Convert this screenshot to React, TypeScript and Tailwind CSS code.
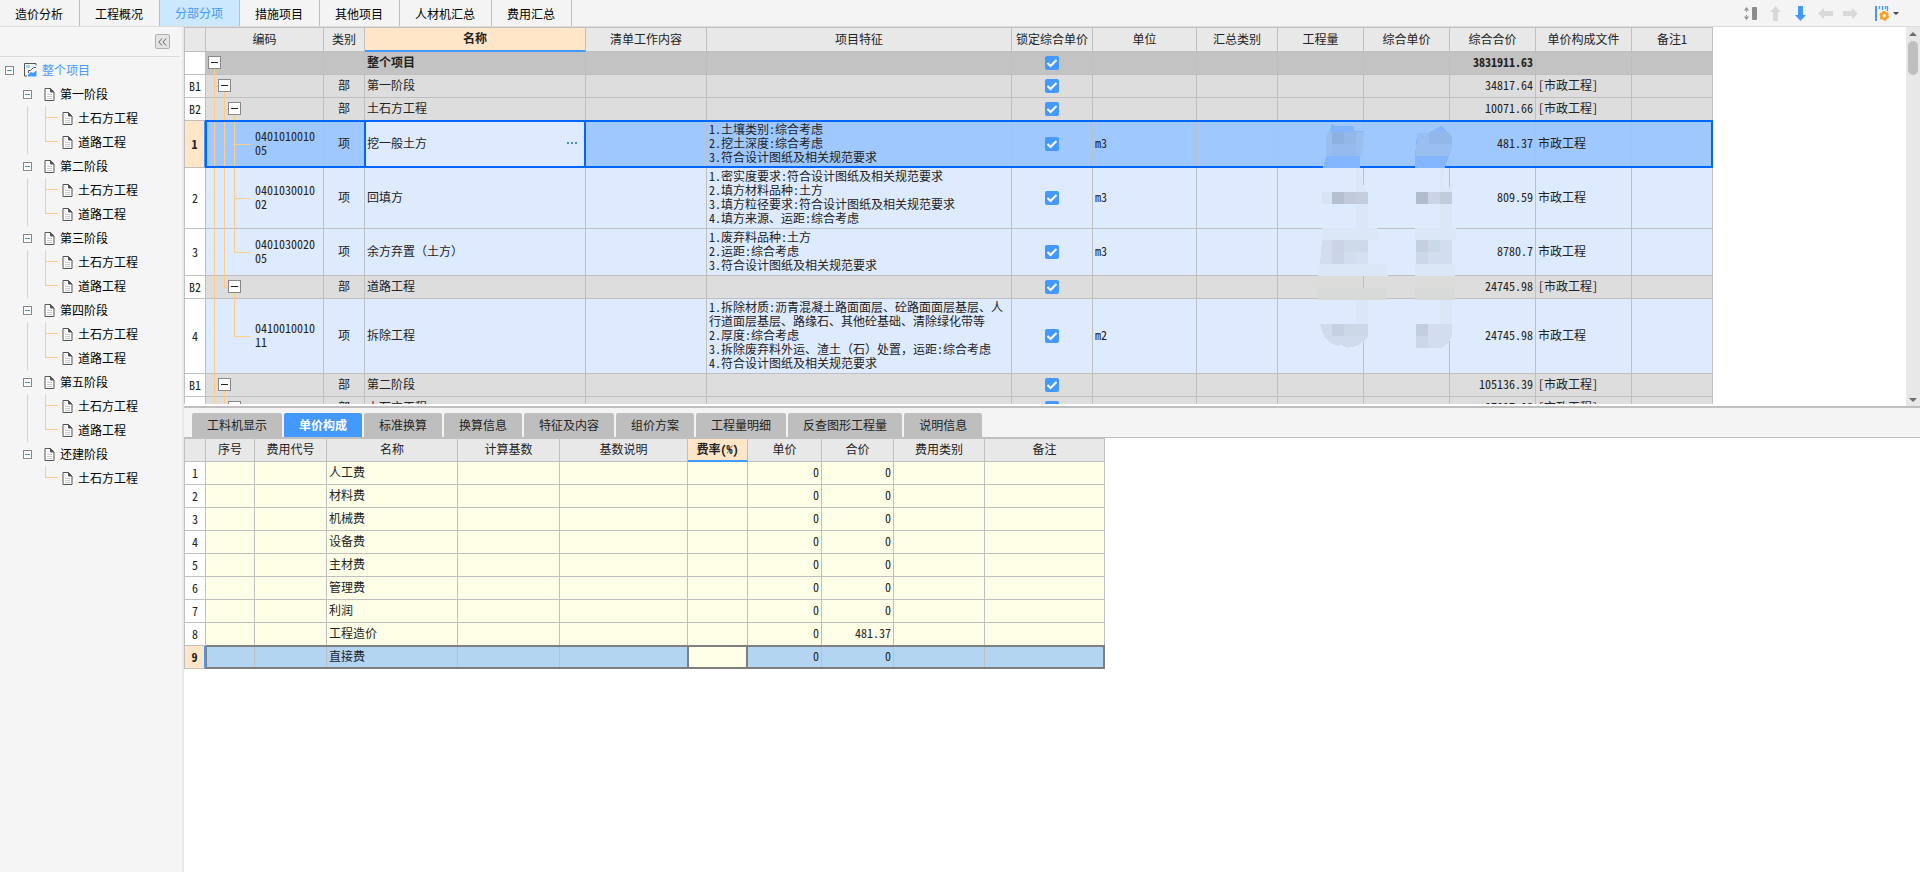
import { ReactNode } from "react";

type Column = { title: string; width: number; active?: boolean };

type Guide = "line" | "branch" | "end" | "none";

type CostRow = {
  mark: string;
  kind: "total" | "section" | "item";
  depth: number;
  guides: Guide[];
  code?: string;
  type?: string;
  name: string;
  feature?: string;
  unit?: string;
  amount: string;
  file?: string;
  selected?: boolean;
};

const MODULES = [
  "造价分析",
  "工程概况",
  "分部分项",
  "措施项目",
  "其他项目",
  "人材机汇总",
  "费用汇总",
];

const STAGES = [
  { name: "第一阶段", parts: ["土石方工程", "道路工程"] },
  { name: "第二阶段", parts: ["土石方工程", "道路工程"] },
  { name: "第三阶段", parts: ["土石方工程", "道路工程"] },
  { name: "第四阶段", parts: ["土石方工程", "道路工程"] },
  { name: "第五阶段", parts: ["土石方工程", "道路工程"] },
  { name: "还建阶段", parts: ["土石方工程"] },
];

const COST_COLUMNS: Column[] = [
  { title: "", width: 21 },
  { title: "编码", width: 118 },
  { title: "类别", width: 41 },
  { title: "名称", width: 221, active: true },
  { title: "清单工作内容", width: 121 },
  { title: "项目特征", width: 305 },
  { title: "锁定综合单价", width: 81 },
  { title: "单位", width: 104 },
  { title: "汇总类别", width: 81 },
  { title: "工程量", width: 86 },
  { title: "综合单价", width: 86 },
  { title: "综合合价", width: 86 },
  { title: "单价构成文件", width: 96 },
  { title: "备注1", width: 81 },
];

const COST_ROWS: CostRow[] = [
  { mark: "", kind: "total", depth: 0, guides: [], name: "整个项目", amount: "3831911.63" },
  {
    mark: "B1",
    kind: "section",
    depth: 1,
    guides: ["branch"],
    type: "部",
    name: "第一阶段",
    amount: "34817.64",
    file: "[市政工程]",
  },
  {
    mark: "B2",
    kind: "section",
    depth: 2,
    guides: ["line", "branch"],
    type: "部",
    name: "土石方工程",
    amount: "10071.66",
    file: "[市政工程]",
  },
  {
    mark: "1",
    kind: "item",
    depth: 3,
    guides: ["line", "line", "branch"],
    code: "040101001005",
    type: "项",
    name: "挖一般土方",
    feature: "1.土壤类别:综合考虑\n2.挖土深度:综合考虑\n3.符合设计图纸及相关规范要求",
    unit: "m3",
    amount: "481.37",
    file: "市政工程",
    selected: true,
  },
  {
    mark: "2",
    kind: "item",
    depth: 3,
    guides: ["line", "line", "branch"],
    code: "040103001002",
    type: "项",
    name: "回填方",
    feature:
      "1.密实度要求:符合设计图纸及相关规范要求\n2.填方材料品种:土方\n3.填方粒径要求:符合设计图纸及相关规范要求\n4.填方来源、运距:综合考虑",
    unit: "m3",
    amount: "809.59",
    file: "市政工程",
  },
  {
    mark: "3",
    kind: "item",
    depth: 3,
    guides: ["line", "line", "end"],
    code: "040103002005",
    type: "项",
    name: "余方弃置（土方）",
    feature: "1.废弃料品种:土方\n2.运距:综合考虑\n3.符合设计图纸及相关规范要求",
    unit: "m3",
    amount: "8780.7",
    file: "市政工程",
  },
  {
    mark: "B2",
    kind: "section",
    depth: 2,
    guides: ["line", "end"],
    type: "部",
    name: "道路工程",
    amount: "24745.98",
    file: "[市政工程]",
  },
  {
    mark: "4",
    kind: "item",
    depth: 3,
    guides: ["line", "none", "end"],
    code: "041001001011",
    type: "项",
    name: "拆除工程",
    feature:
      "1.拆除材质:沥青混凝土路面面层、砼路面面层基层、人行道面层基层、路缘石、其他砼基础、清除绿化带等\n2.厚度:综合考虑\n3.拆除废弃料外运、渣土（石）处置，运距:综合考虑\n4.符合设计图纸及相关规范要求",
    unit: "m2",
    amount: "24745.98",
    file: "市政工程",
  },
  {
    mark: "B1",
    kind: "section",
    depth: 1,
    guides: ["branch"],
    type: "部",
    name: "第二阶段",
    amount: "105136.39",
    file: "[市政工程]",
  },
  {
    mark: "B2",
    kind: "section",
    depth: 2,
    guides: ["line", "branch"],
    type: "部",
    name: "土石方工程",
    amount: "97097.98",
    file: "[市政工程]",
  },
];

const DETAIL_TABS = [
  "工料机显示",
  "单价构成",
  "标准换算",
  "换算信息",
  "特征及内容",
  "组价方案",
  "工程量明细",
  "反查图形工程量",
  "说明信息",
];

const FEE_COLUMNS: Column[] = [
  { title: "", width: 21 },
  { title: "序号", width: 49 },
  { title: "费用代号", width: 72 },
  { title: "名称", width: 131 },
  { title: "计算基数", width: 102 },
  { title: "基数说明", width: 128 },
  { title: "费率(%)", width: 60, active: true },
  { title: "单价", width: 74 },
  { title: "合价", width: 72 },
  { title: "费用类别", width: 91 },
  { title: "备注", width: 120 },
];

const FEE_ROWS = [
  { name: "人工费", total: "0" },
  { name: "材料费", total: "0" },
  { name: "机械费", total: "0" },
  { name: "设备费", total: "0" },
  { name: "主材费", total: "0" },
  { name: "管理费", total: "0" },
  { name: "利润", total: "0" },
  { name: "工程造价", total: "481.37" },
  { name: "直接费", total: "0" },
];

const ROW_BG = {
  total: "bg-[#c3c3c3] font-bold",
  section: "bg-[#dddddd]",
  item: "bg-[#deebff]",
};

const CELL = "border-r border-b border-[#bfbfbf] px-0.5 pt-0 pb-0.5";

function DocIcon() {
  return (
    <svg width="11" height="13" viewBox="0 0 11 13" fill="none">
      <path d="M1 .5H6.5L10 4V12.5H1Z" fill="#fff" stroke="#555" />
      <path d="M6.5 .5V4H10Z" fill="#555" stroke="#555" />
      <path d="M3 6.5H8M3 8.5H8M3 10.5H8" stroke="#ccc" />
    </svg>
  );
}

function ProjectIcon() {
  return (
    <svg width="13" height="14" viewBox="0 0 13 14" fill="none">
      <path d="M12 2.5V.5H.5V13H3" stroke="#555" />
      <path d="M2 2H6V5H2Z" fill="#9fd0ff" />
      <path d="M12 4.5H9.5L6.5 7.5H4.5V10" stroke="#555" />
      <path d="M4 13.5V11.5L7 9L9 10L12.5 7.5V13.5Z" fill="#4499ff" />
    </svg>
  );
}

function TreeToggle() {
  return (
    <button
      aria-label="折叠"
      className="flex size-[9px] shrink-0 items-center justify-center border border-[#888] bg-white"
    >
      <span className="h-px w-[5px] bg-[#2a9fd8]" />
    </button>
  );
}

function Sidebar() {
  return (
    <aside className="flex w-[184px] shrink-0 flex-col border-r-2 border-[#e9e9e9] bg-[#f5f5f5]">
      <div className="mr-0.5 flex h-[30px] items-center justify-end border-b border-[#dcdcdc] pr-2.5">
        <button
          aria-label="收起"
          className="flex size-[15px] items-center justify-center rounded-[2px] border border-[#b0b0b0] bg-[#e4e4e4]"
        >
          <svg width="9" height="8" viewBox="0 0 9 8" fill="none" stroke="#666">
            <path d="M4 .5L.8 4L4 7.5M8.2 .5L5 4L8.2 7.5" />
          </svg>
        </button>
      </div>
      <nav className="pt-px text-black">
        <div className="flex h-6 items-center pl-[5px]">
          <TreeToggle />
          <span className="ml-2.5">
            <ProjectIcon />
          </span>
          <a href="#" className="ml-[5px] text-[#4499ff]">
            整个项目
          </a>
        </div>
        {STAGES.map((stage, i) => (
          <div key={stage.name}>
            <div className="flex h-6 items-center pl-[23px]">
              <TreeToggle />
              <span className="ml-3">
                <DocIcon />
              </span>
              <a href="#" className="ml-[5px]">
                {stage.name}
              </a>
            </div>
            <ul
              className={
                i < STAGES.length - 1
                  ? "ml-[27px] border-l border-[#ffcc88]"
                  : "ml-[27px] border-l border-transparent"
              }
            >
              {stage.parts.map((part, j) => (
                <li key={part} className="flex h-6 items-center pl-[17px]">
                  <svg width="13" height="24" viewBox="0 0 13 24" stroke="#ffcc88">
                    <path d={j < stage.parts.length - 1 ? "M.5 0V24" : "M.5 0V12"} />
                    <path d="M0 11.5H13" />
                  </svg>
                  <span className="ml-1">
                    <DocIcon />
                  </span>
                  <a href="#" className="ml-[5px]">
                    {part}
                  </a>
                </li>
              ))}
            </ul>
          </div>
        ))}
      </nav>
    </aside>
  );
}

function IconButton({ label, children }: { label: string; children: ReactNode }) {
  return (
    <button aria-label={label} className="flex w-[25px] items-center justify-center">
      {children}
    </button>
  );
}

function TopBar() {
  return (
    <header className="flex h-[27px] justify-between border-b border-[#dcdcdc] bg-[#f4f4f4]">
      <div className="flex">
        {MODULES.map((name) => (
          <button
            key={name}
            className={
              name === "分部分项"
                ? "border-r border-[#bfbfbf] bg-[#cce8ff] pr-4 pl-[15px] text-[#4499ff]"
                : "border-r border-[#bfbfbf] pt-0.5 pr-4 pl-[15px] text-black"
            }
          >
            {name}
          </button>
        ))}
      </div>
      <div className="flex pr-[21px]">
        <IconButton label="调整行高">
          <svg width="13" height="13" viewBox="0 0 13 13" fill="#8c8c8c">
            <path d="M2.5 0L5 3.5H0ZM2 4H3V5H2ZM2 8H3V9H2ZM2.5 13L0 9.5H5Z" />
            <rect x="8" y="0" width="5" height="13" rx="1" />
          </svg>
        </IconButton>
        <IconButton label="上移">
          <svg width="11" height="15" viewBox="0 0 11 15" fill="#d9d9d9">
            <path d="M5.5 0L11 6H8V15H3V6H0Z" />
          </svg>
        </IconButton>
        <IconButton label="下移">
          <svg width="11" height="15" viewBox="0 0 11 15" fill="#4499ff">
            <path d="M5.5 15L0 9H3V0H8V9H11Z" />
          </svg>
        </IconButton>
        <IconButton label="升级">
          <svg width="15" height="11" viewBox="0 0 15 11" fill="#d9d9d9">
            <path d="M0 5.5L6 0V3H15V8H6V11Z" />
          </svg>
        </IconButton>
        <IconButton label="降级">
          <svg width="15" height="11" viewBox="0 0 15 11" fill="#d9d9d9">
            <path d="M15 5.5L9 0V3H0V8H9V11Z" />
          </svg>
        </IconButton>
        <button aria-label="列设置" className="ml-3 flex items-center gap-1">
          <svg width="14" height="15" viewBox="0 0 14 15" fill="none">
            <path d="M1 0V15" stroke="#4499ff" strokeWidth="2" />
            <path d="M4.5 0V3M7.5 0V4M10.5 0V3M12.5 0V5" stroke="#4499ff" strokeWidth="1.4" />
            <circle cx="9.2" cy="9.8" r="2.9" stroke="#ff9f1f" strokeWidth="2.4" />
            <circle
              cx="9.2"
              cy="9.8"
              r="4.2"
              stroke="#ff9f1f"
              strokeWidth="1.4"
              strokeDasharray="2.6 1.8"
            />
          </svg>
          <svg width="6" height="3" viewBox="0 0 6 3" fill="#444">
            <path d="M0 0H6L3 3Z" />
          </svg>
        </button>
      </div>
    </header>
  );
}

function TableHead({ columns, rowClass }: { columns: Column[]; rowClass: string }) {
  return (
    <>
      <colgroup>
        {columns.map((col, i) => (
          <col key={i} style={{ width: col.width }} />
        ))}
      </colgroup>
      <thead>
        <tr className={rowClass}>
          {columns.map((col, i) => (
            <th
              key={i}
              className={
                col.active
                  ? "border-r border-b-2 border-r-[#bfbfbf] border-b-[#4499ff] bg-[#ffe6c8] pb-0.5 font-bold whitespace-nowrap"
                  : "border-r border-b border-[#bfbfbf] bg-[#e8e8e8] pb-0.5 font-normal whitespace-nowrap"
              }
            >
              {col.title}
            </th>
          ))}
        </tr>
      </thead>
    </>
  );
}

/* Grid text uses half-width digits, full-width punctuation has to stay full */
function GridText({ text }: { text: string }) {
  return text.split(/([（），])/).map((part, i) =>
    i % 2 ? (
      <span key={i} className="[font-feature-settings:normal]">
        {part}
      </span>
    ) : (
      part
    )
  );
}

/* Connector lines behind the code column, one level every 10px */
function Guides({ row }: { row: CostRow }) {
  return (
    <svg
      className="absolute top-0 left-0 h-[calc(100%+1px)] w-12"
      stroke="#ffcc88"
      aria-hidden="true"
    >
      {row.guides.map((guide, level) => {
        if (guide === "none") return null;
        const x = 8.5 + level * 10;
        return (
          <g key={level}>
            <line x1={x} x2={x} y1="0" y2={guide === "end" ? "50%" : "100%"} />
            {guide !== "line" && (
              <line x1={x} x2={row.kind === "item" ? x + 16 : x + 4} y1="50%" y2="50%" />
            )}
          </g>
        );
      })}
      {row.kind !== "item" && (
        <line x1={8.5 + row.depth * 10} x2={8.5 + row.depth * 10} y1="50%" y2="100%" />
      )}
    </svg>
  );
}

const TOGGLE_INDENT = ["ml-0", "ml-2.5", "ml-5"];

function CodeCell({ row }: { row: CostRow }) {
  return (
    <td className={`${CELL} relative`}>
      <Guides row={row} />
      {row.kind === "item" ? (
        <span className="block pr-1 pl-[47px] break-all">{row.code}</span>
      ) : (
        <button
          aria-label="折叠"
          className={`relative flex size-[13px] items-center justify-center border border-[#888] bg-white ${TOGGLE_INDENT[row.depth]}`}
        >
          <span className="h-px w-[7px] bg-[#222]" />
        </button>
      )}
    </td>
  );
}

function LockBox({ name }: { name: string }) {
  return (
    <span className="grid place-items-center">
      <input
        type="checkbox"
        defaultChecked
        aria-label={`锁定综合单价 ${name}`}
        className="col-start-1 row-start-1 size-3.5 appearance-none rounded-[2px] bg-[#4499ff]"
      />
      <svg
        className="pointer-events-none col-start-1 row-start-1"
        width="14"
        height="14"
        viewBox="0 0 14 14"
        fill="none"
      >
        <path d="M2.5 7L5.5 10L11.5 4" stroke="#fff" strokeWidth="2" />
      </svg>
    </span>
  );
}

/* Pixelated patches over the hidden quantities and prices */
function Mosaic() {
  return (
    <svg
      className="pointer-events-none absolute top-[89px] left-[1116px] z-20"
      width="170"
      height="240"
      viewBox="0 0 510 720"
      shapeRendering="crispEdges"
      aria-hidden="true"
    >
      <path d="M96 24L108 30H162V45H191V66L180 120V156H69L78 120V66L87 48Z" fill="#84b6ff" />
      <path d="M84 48H191V66L184 120H78V66Z" fill="#98bff0" />
      <path d="M96 48H132V84H96Z" fill="#8db1e0" />
      <path d="M132 48H168V84H132Z" fill="#93b7e7" />
      <path d="M96 84H168V120H96Z" fill="#95bbee" />
      <path d="M423 29L456 60V90L435 156H345V120L351 51H386Z" fill="#84b6ff" />
      <path d="M351 51H446L456 60V90L444 120H348Z" fill="#99bff1" />
      <path d="M386 51L400 45H440L456 60V84H386Z" fill="#92b8ea" />

      <path d="M186 207H195V480H186ZM444 213H453V478H444Z" fill="#deebff" />
      <path d="M168 156H180L186 200L204 234V336H168Z" fill="#dae7f7" />
      <path d="M66 228H96V264H66Z" fill="#d7e4f5" />
      <path d="M96 228H132V264H96Z" fill="#b5bfd0" />
      <path d="M132 228H168V264H132Z" fill="#c0cada" />
      <path d="M168 228H204V264H168Z" fill="#c4cddb" />
      <path d="M420 156H434L428 212H456V336H420Z" fill="#dae7f7" />
      <path d="M348 228H384V264H348Z" fill="#b3bccd" />
      <path d="M384 228H420V264H384Z" fill="#cad4e7" />
      <path d="M420 228H456V264H420Z" fill="#c1ccdb" />

      <path d="M66 336H231L240 372H66ZM345 336H468V372H345Z" fill="#dae7f7" />
      <path d="M66 372H204V444H60Z" fill="#d2deef" />
      <path d="M96 372H132V408H96Z" fill="#cbd4e7" />
      <path d="M132 372H204V408H132Z" fill="#cedaea" />
      <path d="M96 408H132V444H96Z" fill="#cad6e7" />
      <path d="M168 408H204V444H168Z" fill="#d6e0f3" />
      <path d="M348 372H456V444H348Z" fill="#d2deef" />
      <path d="M348 372H384V408H348Z" fill="#c5cfe0" />
      <path d="M384 372H420V408H384Z" fill="#cbd8e8" />
      <path d="M348 408H384V444H348Z" fill="#ccd8e9" />
      <path d="M60 444H256L264 480H54ZM345 444H467L465 480H345Z" fill="#dae7f7" />

      <path d="M54 480H188V516H54ZM345 480H465V516H345Z" fill="#dcdcdb" />
      <path d="M54 516H264L258 552H54ZM345 516H465V552H345Z" fill="#d8dada" />

      <path d="M186 552H204V660H186ZM444 552H453V660H444Z" fill="#deebff" />
      <path d="M168 552H204V624H168ZM420 552H456V624H420Z" fill="#dae7f7" />
      <path
        d="M60 624H204V666L190 678L168 690L144 696L128 690L120 684L114 690L90 680L72 662Z"
        fill="#d0dcee"
      />
      <path d="M96 624H204V660H96Z" fill="#cbd7e7" />
      <path d="M96 624H132V660H96Z" fill="#c5d1e3" />
      <path d="M348 624H456V660L446 682L424 696H348Z" fill="#d2deef" />
      <path d="M348 624H384V660H348Z" fill="#c5cee1" />
      <path d="M348 660H384V696H348Z" fill="#ccd8e9" />
    </svg>
  );
}

function CostTable() {
  return (
    <table className="w-0 table-fixed border-separate border-spacing-0 border-t border-l border-[#bfbfbf]">
      <TableHead columns={COST_COLUMNS} rowClass="h-6" />
      <tbody>
        {COST_ROWS.map((row, i) => (
          <tr
            key={i}
            className={
              row.selected
                ? "relative h-[23px] bg-[#9fc8ff]"
                : `h-[23px] ${ROW_BG[row.kind]}`
            }
          >
            <th
              className={
                row.selected
                  ? "border-r-2 border-b border-r-[#4499ff] border-b-[#bfbfbf] bg-[#ffe6c8] p-0 font-bold"
                  : "border-r border-b border-[#bfbfbf] bg-white p-0 font-normal"
              }
            >
              {row.mark}
              {row.selected && (
                <span className="pointer-events-none absolute -top-px right-0 bottom-0 left-5 z-10 border-2 border-[#0066ff]" />
              )}
            </th>
            <CodeCell row={row} />
            <td className={`${CELL} text-center`}>{row.type}</td>
            {row.selected ? (
              <td className={`${CELL} relative bg-[#deebff]`}>
                <span className="pointer-events-none absolute -top-px right-[-1px] bottom-[-1px] -left-px z-10 border-2 border-[#0066ff]" />
                <span className="flex items-center justify-between pr-[3px]">
                  <input
                    aria-label="名称"
                    defaultValue={row.name}
                    className="h-3.5 w-40 bg-transparent outline-none"
                  />
                  <button aria-label="更多" className="flex h-3.5 w-4 items-center justify-center gap-0.5">
                    <span className="size-0.5 bg-[#4490d0]" />
                    <span className="size-0.5 bg-[#4490d0]" />
                    <span className="size-0.5 bg-[#4490d0]" />
                  </button>
                </span>
              </td>
            ) : (
              <td className={CELL}>
                <GridText text={row.name} />
              </td>
            )}
            <td className={CELL} />
            <td className={`${CELL} whitespace-pre-line`}>
              {row.feature?.split("\n").map((line) => (
                <p key={line} className="first:pt-px last:pb-px">
                  <GridText text={line} />
                </p>
              ))}
            </td>
            <td className="border-r border-b border-[#bfbfbf] p-0">
              <LockBox name={row.name} />
            </td>
            <td className={CELL}>{row.unit}</td>
            <td className={CELL} />
            <td className={CELL} />
            <td className={CELL} />
            <td className={`${CELL} text-right`}>{row.amount}</td>
            <td className={`${CELL} whitespace-nowrap`}>{row.file}</td>
            <td className={CELL} />
          </tr>
        ))}
      </tbody>
    </table>
  );
}

function ScrollBar() {
  return (
    <div className="flex w-3.5 shrink-0 flex-col items-center justify-between bg-[#e8e8e8] pt-[5px] pb-1">
      <div className="flex flex-col items-center gap-[5px]">
        <svg width="8" height="4" viewBox="0 0 8 4" fill="#6b6b75">
          <path d="M4 0L8 4H0Z" />
        </svg>
        <span className="h-[34px] w-2.5 rounded-full bg-[#bfbfbf]" />
      </div>
      <svg width="8" height="4" viewBox="0 0 8 4" fill="#6b6b75">
        <path d="M0 0H8L4 4Z" />
      </svg>
    </div>
  );
}

function FeeTable() {
  return (
    <table className="w-0 table-fixed border-separate border-spacing-0 border-t border-l border-[#bfbfbf] bg-[#ffffe8]">
      <TableHead columns={FEE_COLUMNS} rowClass="h-[23px]" />
      <tbody>
        {FEE_ROWS.map((row, i) => {
          const selected = i === FEE_ROWS.length - 1;
          return (
            <tr
              key={row.name}
              className={selected ? "relative h-[23px] bg-[#b3d5f2]" : "h-[23px]"}
            >
              <th
                className={
                  selected
                    ? "border-r-2 border-b border-r-[#4499ff] border-b-[#bfbfbf] bg-[#ffe6c8] p-0 font-bold"
                    : "border-r border-b border-[#bfbfbf] bg-white p-0 font-normal"
                }
              >
                {i + 1}
                {selected && (
                  <span className="pointer-events-none absolute -top-px right-0 bottom-0 left-[21px] z-10 border-2 border-l border-[#7f7f7f]" />
                )}
              </th>
              <td className={CELL} />
              <td className={CELL} />
              <td className={CELL}>{row.name}</td>
              <td className={CELL} />
              <td className={CELL} />
              {selected ? (
                <td className={`${CELL} relative bg-[#ffffe8]`}>
                  <input
                    aria-label="费率"
                    className="absolute -inset-px w-[61px] border-2 border-[#7f7f7f] bg-[#ffffe8] outline-none"
                  />
                </td>
              ) : (
                <td className={CELL} />
              )}
              <td className={`${CELL} text-right`}>0</td>
              <td className={`${CELL} text-right`}>{row.total}</td>
              <td className={CELL} />
              <td className={CELL} />
            </tr>
          );
        })}
      </tbody>
    </table>
  );
}

export default function App() {
  return (
    <div className="flex min-h-screen flex-col bg-white font-['Noto_Sans_CJK_SC',sans-serif] text-[12px] leading-[14px] text-[#222]">
      <TopBar />
      <div className="flex flex-1">
        <Sidebar />
        <main className="min-w-0 flex-1">
          <div className="flex h-[379px]">
            <div className="relative mb-0.5 min-w-0 flex-1 overflow-hidden [font-feature-settings:'hwid']">
              <CostTable />
              <Mosaic />
            </div>
            <ScrollBar />
          </div>
          <div className="flex h-8 items-end gap-0.5 border-t-2 border-b border-t-[#bfbfbf] border-b-[#bfbfbf] bg-[#f4f4f4] pl-2">
            {DETAIL_TABS.map((name) => (
              <button
                key={name}
                className={
                  name === "单价构成"
                    ? "h-6 rounded-t-[2px] bg-[#4499ff] px-[15px] font-bold text-white"
                    : "h-6 rounded-t-[2px] bg-[#bebebe] px-[15px]"
                }
              >
                {name}
              </button>
            ))}
          </div>
          <div className="[font-feature-settings:'hwid']">
            <FeeTable />
          </div>
        </main>
      </div>
    </div>
  );
}
